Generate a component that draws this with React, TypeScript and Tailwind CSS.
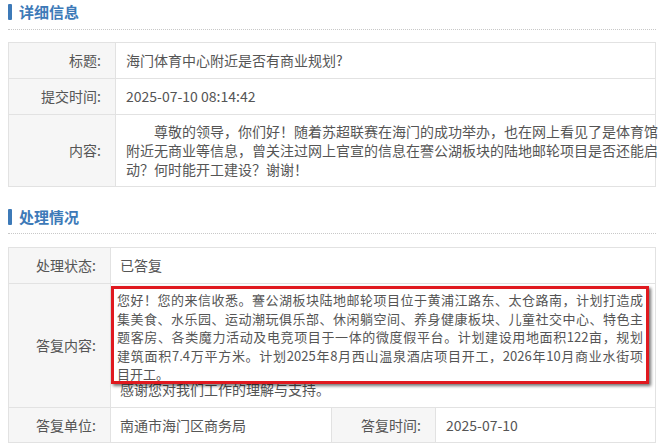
import React from "react";

const FONT = "font-['Noto_Sans_CJK_SC','Noto_Sans',sans-serif]";

const SectionTitle: React.FC<{ title: string; gap?: string }> = ({ title, gap = "mt-[9px]" }) => (
  <div>
    <div className="flex items-center h-[16px]">
      <span className="w-[4px] h-[16px] bg-[#3d7ab8] rounded-[1px]" />
      <span className="ml-[7px] text-[15px] leading-[16px] font-bold text-[#3d7ab8]">{title}</span>
    </div>
    <div className={`${gap} border-t border-dotted border-[#c8c8c8]`} />
  </div>
);

const labelCls =
  "bg-[#f6f6f6] border border-[#e2e2e2] text-right pr-[14px] text-[14px] text-[#555] align-middle";
const cellCls = "border border-[#e2e2e2] text-[14px] text-[#555] bg-white";
const valueCls = `${cellCls} pl-[10px] align-middle`;

const replyLines = [
  "您好！您的来信收悉。謇公湖板块陆地邮轮项目位于黄浦江路东、太仓路南，计划打造成",
  "集美食、水乐园、运动潮玩俱乐部、休闲躺空间、养身健康板块、儿童社交中心、特色主",
  "题客房、各类魔力活动及电竞项目于一体的微度假平台。计划建设用地面积122亩，规划",
  "建筑面积7.4万平方米。计划2025年8月西山温泉酒店项目开工，2026年10月商业水街项",
];

export default function App() {
  return (
    <div className={`${FONT} w-[660px] h-[448px] bg-white overflow-hidden pl-[8px] pr-[4px] pt-[4px]`}>
      <SectionTitle title="详细信息" />

      <table className="mt-[12px] w-[648px] border-collapse table-fixed">
        <colgroup>
          <col className="w-[107px]" />
          <col />
        </colgroup>
        <tbody>
          <tr className="h-[36px]">
            <td className={labelCls}>标题:</td>
            <td className={valueCls}>海门体育中心附近是否有商业规划?</td>
          </tr>
          <tr className="h-[36px]">
            <td className={labelCls}>提交时间:</td>
            <td className={valueCls}>2025-07-10 08:14:42</td>
          </tr>
          <tr className="h-[72px]">
            <td className={labelCls}>内容:</td>
            <td className={`${valueCls} leading-[19px]`}>
              <div className="pl-[28px] whitespace-nowrap">尊敬的领导，你们好！随着苏超联赛在海门的成功举办，也在网上看见了是体育馆</div>
              <div className="whitespace-nowrap">附近无商业等信息，曾关注过网上官宣的信息在謇公湖板块的陆地邮轮项目是否还能启</div>
              <div className="whitespace-nowrap">动？何时能开工建设？谢谢！</div>
            </td>
          </tr>
        </tbody>
      </table>

      <div className="mt-[22px]">
        <SectionTitle title="处理情况" gap="mt-[8px]" />
      </div>

      <table className="mt-[13px] w-[648px] border-collapse table-fixed">
        <colgroup>
          <col className="w-[102px]" />
          <col className="w-[221px]" />
          <col className="w-[104px]" />
          <col />
        </colgroup>
        <tbody>
          <tr className="h-[36px]">
            <td className={labelCls}>处理状态:</td>
            <td className={`${cellCls} pl-[9px] align-middle`} colSpan={3}>已答复</td>
          </tr>
          <tr className="h-[124px]">
            <td className={labelCls}>答复内容:</td>
            <td className={`${cellCls} relative align-bottom pb-[8px] pl-[9px]`} colSpan={3}>
              <div className="leading-[19px]">感谢您对我们工作的理解与支持。</div>
              <div className="absolute left-0 top-[2px] w-[538px] h-[98px] bg-white border-[3px] border-[#e0191f] shadow-[2px_2px_3px_rgba(0,0,0,0.55)] px-[3px] pt-[2px] text-[13px] leading-[18.6px] text-[#555]">
                {replyLines.map((l, i) => (
                  <div key={i} className="text-justify [text-align-last:justify] whitespace-nowrap">
                    {l}
                  </div>
                ))}
                <div>目开工。</div>
              </div>
            </td>
          </tr>
          <tr className="h-[35px]">
            <td className={labelCls}>答复单位:</td>
            <td className={`${cellCls} pl-[9px] align-middle`}>南通市海门区商务局</td>
            <td className={labelCls}>答复时间:</td>
            <td className={valueCls}>2025-07-10</td>
          </tr>
        </tbody>
      </table>
    </div>
  );
}
